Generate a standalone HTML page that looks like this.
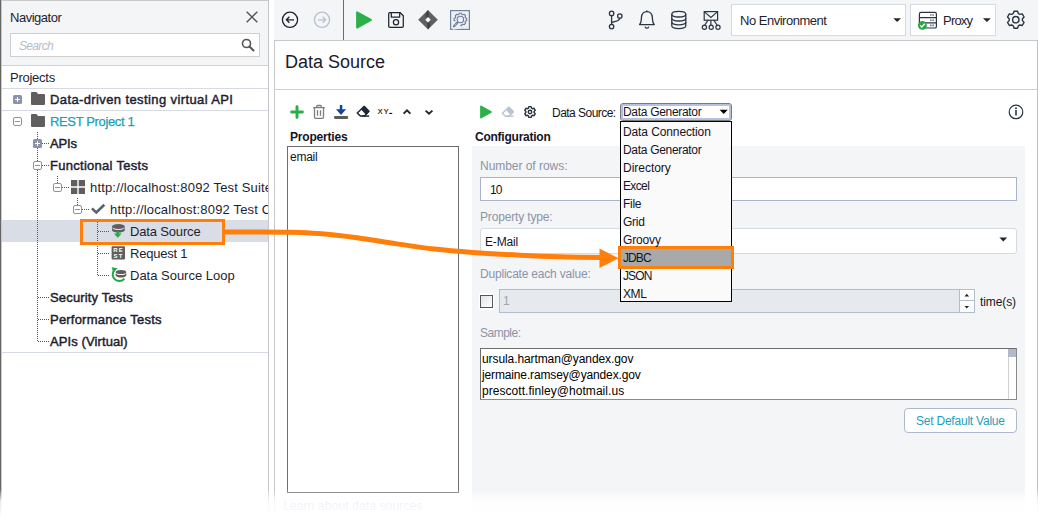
<!DOCTYPE html>
<html><head><meta charset="utf-8"><title>Data Source</title>
<style>
*{box-sizing:border-box;margin:0;padding:0}
html,body{width:1038px;height:519px;overflow:hidden;background:#fff}
body{position:relative;font-family:"Liberation Sans","DejaVu Sans",sans-serif;font-size:13px;color:#1e1e2e}
.abs,.t,.tb,.ln{position:absolute}
.t{white-space:nowrap;line-height:16px;height:16px;font-size:13px;color:#1e1e2e}
.tb{white-space:nowrap;line-height:16px;height:16px;font-size:13px;font-weight:bold;color:#1e1e2e}
.ln{background:#d6dbe3}
svg{position:absolute;overflow:visible}
.sb{-webkit-text-stroke:0.45px currentColor}
.s12{font-size:12px;color:#14141f}
.lbl{color:#8b93a9}
</style></head><body>

<!-- LEFT PANEL -->
<div class="abs" id="lp" style="left:0;top:0;width:269px;height:519px;background:#fff;overflow:hidden">
  <div class="abs" style="left:0;top:0;width:269px;height:65px;background:#f4f5f7"></div>
  <div class="ln" style="left:0;top:0;width:269px;height:1px;background:#c9c9c9"></div>
  <div class="t" style="left:10px;top:10px;letter-spacing:-0.48px">Navigator</div>
  <svg style="left:246px;top:11px" width="12" height="12" viewBox="0 0 12 12"><path d="M0.7 0.7L11.3 11.3M11.3 0.7L0.7 11.3" stroke="#555" stroke-width="1.4" fill="none"/></svg>
  <div class="abs" style="left:10px;top:33px;width:250px;height:24px;background:#fff;border:1px solid #cfcfcf"></div>
  <div class="t" style="left:19px;top:38px;font-style:italic;color:#b4bccb;font-size:12px;letter-spacing:-0.67px">Search</div>
  <svg style="left:241px;top:38px" width="14" height="14" viewBox="0 0 14 14"><circle cx="5.5" cy="5.5" r="4" stroke="#555" stroke-width="1.6" fill="none"/><path d="M8.5 8.5L12.5 12.5" stroke="#555" stroke-width="2" stroke-linecap="round"/></svg>
  <div class="ln" style="left:0;top:65px;width:269px;height:1px;background:#cfd2d6"></div>
  <div class="t" style="left:10px;top:70px;letter-spacing:-0.25px">Projects</div>
  <div class="ln" style="left:0;top:88px;width:269px;height:1px"></div>
  <div class="ln" style="left:0;top:110px;width:269px;height:1px"></div>
  <div class="ln" style="left:0;top:352px;width:269px;height:1px"></div>
  <!-- selected row -->
  <div class="abs" style="left:0;top:220px;width:269px;height:22px;background:#d9dde5"></div>

  <!-- tree dotted lines -->
  <svg style="left:0;top:0" width="269" height="519" id="tree">
    <g stroke="#555" stroke-width="1" stroke-dasharray="1 1" fill="none" shape-rendering="crispEdges">
      <path d="M37.5 132V341"/>
      <path d="M38 143.5H50M38 165.5H50M38 297.5H50M38 319.5H50M38 341.5H50"/>
      <path d="M57.5 176V187"/>
      <path d="M58 187.5H70"/>
      <path d="M77.5 198V209"/>
      <path d="M78 209.5H90"/>
      <path d="M97.5 220V275"/>
      <path d="M98 231.5H110M98 253.5H110M98 275.5H110"/>
    </g>
  </svg>

  <!-- expand boxes -->
  <svg style="left:13px;top:95px" width="9" height="9" viewBox="0 0 9 9"><rect x="0" y="0" width="9" height="9" rx="1.5" fill="#8a93a8"/><path d="M2 4.5H7M4.5 2V7" stroke="#fff" stroke-width="1"/></svg>
  <svg style="left:13px;top:117px" width="9" height="9" viewBox="0 0 9 9"><rect x="0.5" y="0.5" width="8" height="8" rx="1.5" fill="#fff" stroke="#8a93a8"/><path d="M2 4.5H7" stroke="#8a93a8" stroke-width="1"/></svg>
  <svg style="left:33px;top:139px" width="9" height="9" viewBox="0 0 9 9"><rect x="0" y="0" width="9" height="9" rx="1.5" fill="#8a93a8"/><path d="M2 4.5H7M4.5 2V7" stroke="#fff" stroke-width="1"/></svg>
  <svg style="left:33px;top:161px" width="9" height="9" viewBox="0 0 9 9"><rect x="0.5" y="0.5" width="8" height="8" rx="1.5" fill="#fff" stroke="#8a93a8"/><path d="M2 4.5H7" stroke="#8a93a8" stroke-width="1"/></svg>
  <svg style="left:53px;top:183px" width="9" height="9" viewBox="0 0 9 9"><rect x="0.5" y="0.5" width="8" height="8" rx="1.5" fill="#fff" stroke="#8a93a8"/><path d="M2 4.5H7" stroke="#8a93a8" stroke-width="1"/></svg>
  <svg style="left:73px;top:205px" width="9" height="9" viewBox="0 0 9 9"><rect x="0.5" y="0.5" width="8" height="8" rx="1.5" fill="#fff" stroke="#8a93a8"/><path d="M2 4.5H7" stroke="#8a93a8" stroke-width="1"/></svg>

  <!-- folder icons -->
  <svg style="left:31px;top:92px" width="14" height="13" viewBox="0 0 14 13"><path d="M1 0H5.5L7 2H13a1 1 0 0 1 1 1V12a1 1 0 0 1-1 1H1a1 1 0 0 1-1-1V1a1 1 0 0 1 1-1z" fill="#5f5f5f"/></svg>
  <svg style="left:31px;top:114px" width="14" height="13" viewBox="0 0 14 13"><path d="M1 0H5.5L7 2H13a1 1 0 0 1 1 1V12a1 1 0 0 1-1 1H1a1 1 0 0 1-1-1V1a1 1 0 0 1 1-1z" fill="#5f5f5f"/></svg>

  <div class="t sb" style="left:50px;top:92px;letter-spacing:0.39px">Data-driven testing virtual API</div>
  <div class="t" style="left:50px;top:114px;color:#17a2b8;-webkit-text-stroke:0.25px #17a2b8;letter-spacing:-0.36px">REST Project 1</div>
  <div class="t sb" style="left:50px;top:136px;letter-spacing:-0.12px">APIs</div>
  <div class="t sb" style="left:50px;top:158px;letter-spacing:0.28px">Functional Tests</div>
  <!-- suite icon -->
  <svg style="left:71px;top:180px" width="14" height="14" viewBox="0 0 14 14"><path d="M0 0H6.3V6.3H0zM7.7 0H14V6.3H7.7zM0 7.7H6.3V14H0zM7.7 7.7H14V14H7.7z" fill="#5f5f5f"/></svg>
  <div class="t" style="left:90px;top:180px;letter-spacing:0.17px">http://localhost:8092 Test Suite</div>
  <svg style="left:0;top:0" width="269" height="519"><path d="M91.9 208.4L96.3 212.5L104.3 204.7" stroke="#5b626f" stroke-width="2.6" fill="none"/></svg>
  <div class="t" style="left:110px;top:202px;letter-spacing:0.17px">http://localhost:8092 Test Case</div>
  <!-- data source icon -->
  <svg style="left:0;top:0" width="269" height="519"><g fill="#5f5f5f"><ellipse cx="118.4" cy="226.4" rx="6.3" ry="2.5"/><path d="M112.1 228.2C113.5 230.6 123.3 230.6 124.7 228.2V230.6C123.3 233.4 113.5 233.4 112.1 230.6z"/><path d="M112.1 226.4V230.6H113V226.4zM123.8 226.4V230.6H124.7V226.4z" opacity="0.7"/></g><path d="M116.6 231.4H119V233.6H121.7L117.8 237.7L113.9 233.6H116.6z" fill="#28a745"/></svg>
  <div class="t" style="left:130px;top:224px;letter-spacing:-0.16px">Data Source</div>
  <!-- REST icon -->
  <svg style="left:0;top:0" width="269" height="519"><rect x="111.6" y="246.2" width="13.4" height="13.4" rx="1" fill="#5f5f5f"/><text x="118.6" y="252.4" font-size="6" font-weight="bold" fill="#fff" text-anchor="middle" font-family="Liberation Sans, sans-serif" letter-spacing="1.2">RE</text><text x="118.6" y="258.4" font-size="6" font-weight="bold" fill="#fff" text-anchor="middle" font-family="Liberation Sans, sans-serif" letter-spacing="1.2">ST</text></svg>
  <div class="t" style="left:130px;top:246px;letter-spacing:-0.21px">Request 1</div>
  <!-- loop icon -->
  <svg style="left:0;top:0" width="269" height="519"><path d="M114.2 270.2A6.4 6.4 0 1 0 124.4 278.6" stroke="#28a745" stroke-width="2" fill="none"/><path d="M111.6 267.2L117.6 268.2L113.4 272.8z" fill="#28a745"/><g fill="#5f5f5f"><ellipse cx="121" cy="272" rx="5.2" ry="2.1"/><path d="M115.8 273.6C117 275.6 125 275.6 126.2 273.6V275.8C125 278.2 117 278.2 115.8 275.8z"/><path d="M115.8 272V275.8H116.6V272zM125.4 272V275.8H126.2V272z" opacity="0.7"/></g></svg>
  <div class="t" style="left:130px;top:268px;letter-spacing:-0.01px">Data Source Loop</div>
  <div class="t sb" style="left:50px;top:290px;letter-spacing:0.16px">Security Tests</div>
  <div class="t sb" style="left:50px;top:312px;letter-spacing:0.21px">Performance Tests</div>
  <div class="t sb" style="left:50px;top:334px;letter-spacing:0.10px">APIs (Virtual)</div>

  <div class="abs" style="left:0;top:0;width:1px;height:519px;background:#666"></div><div class="abs" style="left:1px;top:0;width:1px;height:519px;background:#c9c9c9"></div>
  <div class="abs" style="left:268px;top:0;width:1px;height:519px;background:#c6c6c6"></div>
</div>

<!-- RIGHT PANEL -->
<div class="abs" id="rp" style="left:274px;top:0;width:764px;height:519px;background:#fff;overflow:hidden">
  <div class="abs" style="left:0;top:0;width:764px;height:40px;background:#f4f5f7"></div>
  <div class="ln" style="left:0;top:40px;width:764px;height:1px;background:#c8c8c8"></div>
  <div class="ln" style="left:0;top:40px;width:1px;height:479px;background:#c8c8c8"></div>
  <div class="ln" style="left:69px;top:0;width:1px;height:40px;background:#6b6b6b"></div>
  <div class="ln" style="left:0;top:89px;width:764px;height:1px;background:#cfcfcf"></div>
  <div class="abs" style="left:11px;top:51px;font-size:18px;line-height:22px;white-space:nowrap;color:#1a1a2a">Data Source</div>
  <div class="ln" style="left:763px;top:40px;width:1px;height:479px;background:#c0c0c0"></div>

  <!-- toolbar icons (coords relative to rp: x-274) -->
  <svg style="left:0;top:0" width="764" height="40" id="tbicons">
    <!-- back -->
    <g transform="translate(16,19.8)" fill="none" stroke="#1f2430" stroke-width="1.3"><circle r="7.6"/><path d="M4 0H-3.6M-0.6 -3L-3.6 0L-0.6 3"/></g>
    <!-- forward -->
    <g transform="translate(48,19.8)" fill="none" stroke="#b9c0d0" stroke-width="1.3"><circle r="7.6"/><path d="M-4 0H3.6M0.6 -3L3.6 0L0.6 3"/></g>
    <!-- play -->
    <path d="M83.1 12.3L96.9 19.9L83.1 27.5z" fill="#2cb04a" stroke="#2cb04a" stroke-width="2" stroke-linejoin="round"/>
    <!-- save -->
    <g fill="none" stroke="#1f2430" stroke-width="1.25" stroke-linejoin="round"><path d="M115.7 12.7H126.3L129.3 15.7V26.3a1 1 0 0 1-1 1H115.7a1 1 0 0 1-1-1V13.7a1 1 0 0 1 1-1z"/><path d="M117.3 12.7V17H125.7V12.7"/><circle cx="122" cy="22.3" r="2.6"/></g>
    <!-- jira diamond -->
    <defs><linearGradient id="jg1" x1="1" y1="0" x2="0" y2="0.6"><stop offset="0" stop-color="#1d2430"/><stop offset="1" stop-color="#1d2430" stop-opacity="0"/></linearGradient><linearGradient id="jg2" x1="0" y1="1" x2="1" y2="0.4"><stop offset="0" stop-color="#1d2430"/><stop offset="1" stop-color="#1d2430" stop-opacity="0"/></linearGradient></defs>
    <g transform="translate(154,19.8)"><path d="M0 -9.8L9.8 0L0 9.8L-9.8 0z" fill="#606060"/><path d="M0 -9.8L0.7 -2.6L-2.6 0.6L-3.2 -5z" fill="url(#jg1)"/><path d="M0 9.8L-0.7 2.6L2.6 -0.6L3.2 5z" fill="url(#jg2)"/><path d="M0 -2.7L2.7 0L0 2.7L-2.7 0z" fill="#fff"/></g>
    <!-- inspect -->
    <rect x="176.6" y="10.6" width="18.8" height="18.8" fill="#eef0f5" stroke="#7283a2" stroke-width="1.2"/>
    <g transform="translate(186.4,19.5)" fill="none" stroke="#6d7d9b" stroke-width="1.1" stroke-linejoin="round"><path d="M-1.46 -5.09L-1.11 -6.30L1.11 -6.30L1.46 -5.09L2.57 -4.64L3.67 -5.24L5.24 -3.67L4.64 -2.57L5.09 -1.46L6.30 -1.11L6.30 1.11L5.09 1.46L4.64 2.57L5.24 3.67L3.67 5.24L2.57 4.64L1.46 5.09L1.11 6.30L-1.11 6.30L-1.46 5.09L-2.57 4.64L-3.67 5.24L-5.24 3.67L-4.64 2.57L-5.09 1.46L-6.30 1.11L-6.30 -1.11L-5.09 -1.46L-4.64 -2.57L-5.24 -3.67L-3.67 -5.24L-2.57 -4.64z"/><path d="M-9 1L-1 1L-1 9L-9 9z" fill="#eef0f5" stroke="none" transform="rotate(-8)"/><circle r="3.2"/><path d="M-3.2 3.4L-6.4 6.8" stroke-width="2.3" stroke-linecap="round"/><path d="M-3.6 3.9L-5.8 6.2" stroke="#eef0f5" stroke-width="0.6"/></g>
    <!-- branch -->
    <g fill="none" stroke="#2b3442" stroke-width="1.3"><circle cx="337.6" cy="13.4" r="2.2"/><circle cx="337.6" cy="26.6" r="2.2"/><circle cx="345.8" cy="16" r="2.2"/><path d="M337.6 15.6V24.4M345.8 18.2C345.8 21.2 340.4 21.4 337.6 22.8"/></g>
    <!-- bell -->
    <g fill="none" stroke="#2b3442" stroke-width="1.3" stroke-linejoin="round" stroke-linecap="round"><path d="M365.5 24.6C367.6 22.6 367.2 20.6 367.4 17.6C367.7 13.8 370 11.6 372.9 11.6C375.8 11.6 378.1 13.8 378.4 17.6C378.6 20.6 378.2 22.6 380.3 24.6z"/><path d="M371.3 27.2C371.8 28.4 374 28.4 374.5 27.2"/><path d="M372.9 11.4V10.8"/></g>
    <!-- db -->
    <g fill="none" stroke="#2b3442" stroke-width="1.3"><ellipse cx="404.8" cy="14.2" rx="7" ry="2.8"/><path d="M397.8 14.2V25.8C397.8 27.4 401 28.6 404.8 28.6C408.6 28.6 411.8 27.4 411.8 25.8V14.2"/><path d="M397.8 18.2C397.8 19.8 401 21 404.8 21C408.6 21 411.8 19.8 411.8 18.2M397.8 22C397.8 23.6 401 24.8 404.8 24.8C408.6 24.8 411.8 23.6 411.8 22"/></g>
    <!-- envelope network -->
    <g fill="none" stroke="#2b3442" stroke-width="1.2"><rect x="430.2" y="11.6" width="13.4" height="8.6"/><path d="M430.2 11.6L436.9 17.4L443.6 11.6"/><path d="M436.9 20.2V25M434 20.2L430.8 25M439.8 20.2L443 25"/><circle cx="430.4" cy="27.2" r="2.1"/><circle cx="437.2" cy="27.2" r="2.1"/><circle cx="444" cy="27.2" r="2.1"/></g>
    <!-- env box -->
    <rect x="457.5" y="4.5" width="174" height="31" fill="#fff" stroke="#d5dae3"/>
    <path d="M619.3 18.2H627L623.15 22z" fill="#1f2430"/>
    <!-- proxy box -->
    <rect x="636.5" y="4.5" width="85" height="31" fill="#fff" stroke="#d5dae3"/>
    <g fill="none" stroke="#2b3442" stroke-width="1.2"><rect x="645.4" y="12.4" width="17" height="15.6" rx="1.6"/><path d="M645.4 17.6H662.4M645.4 22.8H662.4"/><path d="M656 15H660M656 20.2H660M656 25.4H660" stroke-width="1.6" stroke="#7d838f" stroke-dasharray="1.7 0.6"/></g>
    <circle cx="648.4" cy="25.4" r="4.4" fill="#28a745"/><path d="M646.2 25.4L647.8 27L650.8 23.8" stroke="#fff" stroke-width="1.3" fill="none"/>
    <path d="M709 18.2H716.8L712.9 22z" fill="#1f2430"/>
    <!-- gear -->
    <g transform="translate(741.8,19.7)" fill="none" stroke="#2b3442" stroke-width="1.4" stroke-linejoin="round"><circle r="3.2"/><path d="M-2.51 -6.21L-1.81 -8.51L1.81 -8.51L2.51 -6.21L4.12 -5.28L6.47 -5.82L8.27 -2.69L6.63 -0.93L6.63 0.93L8.27 2.69L6.47 5.82L4.12 5.28L2.51 6.21L1.81 8.51L-1.81 8.51L-2.51 6.21L-4.12 5.28L-6.47 5.82L-8.27 2.69L-6.63 0.93L-6.63 -0.93L-8.27 -2.69L-6.47 -5.82L-4.12 -5.28z"/></g>
  </svg>
  <div class="t" style="left:466px;top:13px;letter-spacing:-0.49px">No Environment</div>
  <div class="t" style="left:669px;top:13px;letter-spacing:-0.79px">Proxy</div>

  <!-- properties toolbar -->
  <svg style="left:0;top:100px" width="764" height="24" id="ptb">
    <!-- plus -->
    <path d="M23 6.6V17.4M17.6 12H28.4" stroke="#27ae49" stroke-width="2.9" stroke-linecap="round" fill="none"/>
    <!-- trash -->
    <g fill="none" stroke="#7e7e7e" stroke-width="1.3" stroke-linejoin="round"><path d="M39.2 7.6H50.8"/><path d="M42.7 7.4V6.4a0.9 0.9 0 0 1 0.9-0.9H46.4a0.9 0.9 0 0 1 0.9 0.9V7.4"/><path d="M40.5 7.8V17.2a1.1 1.1 0 0 0 1.1 1.1H48.4a1.1 1.1 0 0 0 1.1-1.1V7.8"/><path d="M43.5 10.2V15.8M46.5 10.2V15.8"/></g>
    <!-- download -->
    <path d="M65.8 5H68.3V9.2H72.1L67.05 14.9L62 9.2H65.8z" fill="#13439c"/><rect x="60.1" y="16" width="14" height="2.9" rx="0.8" fill="#5c5c5c"/>
    <!-- eraser -->
    <g stroke="#1f2937" stroke-width="1.5" stroke-linejoin="round"><path d="M90.2 6.5L94.8 11.3L90.4 16.1H86.6L83.2 13z" fill="#fff"/><path d="M90.2 6.5L94.8 11.3L92.3 14L87.6 9.1z" fill="#1f2937"/><path d="M88 16.1H95.2" fill="none"/></g>
    <text x="103.8" y="14" font-size="7.2" letter-spacing="1.2" fill="#111" stroke="#111" stroke-width="0.2" font-family="Liberation Sans, sans-serif">XY</text><rect x="115.2" y="12.9" width="3" height="1.1" fill="#111"/>
    <!-- chevrons -->
    <path d="M129.6 13.6L133 10.4L136.4 13.6" stroke="#1f2430" stroke-width="1.9" fill="none"/>
    <path d="M151.6 10.6L155 13.8L158.4 10.6" stroke="#1f2430" stroke-width="1.9" fill="none"/>
    <!-- play -->
    <path d="M207.1 6.5L216.9 12L207.1 17.5z" fill="#2cb04a" stroke="#2cb04a" stroke-width="2" stroke-linejoin="round"/>
    <!-- light eraser -->
    <g stroke="#bcc3d1" stroke-width="1.5" stroke-linejoin="round" transform="translate(144.8,0.4) translate(89,11) scale(0.94) translate(-89,-11)"><path d="M90.2 6.5L94.8 11.3L90.4 16.1H86.6L83.2 13z" fill="#fff"/><path d="M90.2 6.5L94.8 11.3L92.3 14L87.6 9.1z" fill="#bcc3d1"/><path d="M88 16.1H95.2" fill="none"/></g>
    <!-- small gear -->
    <g transform="translate(256,12)" fill="none" stroke="#2b3442" stroke-width="1.45" stroke-linejoin="round"><circle r="1.7"/><path d="M-1.60 -3.77L-1.14 -5.38L1.14 -5.38L1.60 -3.77L2.47 -3.27L4.09 -3.68L5.23 -1.70L4.07 -0.50L4.07 0.50L5.23 1.70L4.09 3.68L2.47 3.27L1.60 3.77L1.14 5.38L-1.14 5.38L-1.60 3.77L-2.47 3.27L-4.09 3.68L-5.23 1.70L-4.07 0.50L-4.07 -0.50L-5.23 -1.70L-4.09 -3.68L-2.47 -3.27z"/></g>
    <!-- info -->
    <g transform="translate(742,11.9)"><circle r="6.8" fill="none" stroke="#2b3442" stroke-width="1.2"/><path d="M0 -1.8V3.7" stroke="#2b3442" stroke-width="1.6" fill="none"/><circle cx="0" cy="-3.7" r="0.95" fill="#2b3442"/></g>
  </svg>
  <div class="tb s12" style="left:16px;top:129px;letter-spacing:-0.20px">Properties</div>
  <div class="tb s12" style="left:201px;top:129px;letter-spacing:-0.24px">Configuration</div>
  <div class="t s12" style="left:278px;top:105px;letter-spacing:-0.53px">Data Source:</div>

  <!-- properties list -->
  <div class="abs" style="left:13px;top:146px;width:172px;height:347px;background:#fff;border:1px solid #6e6e6e"></div>
  <div class="t s12" style="left:16px;top:149px;letter-spacing:-0.24px">email</div>
  <div class="abs" style="left:9px;top:498px;font-size:12.3px;line-height:16px;color:#6a8fd0;white-space:nowrap">Learn about data sources</div>

  <!-- config panel -->
  <div class="abs" style="left:198px;top:146px;width:553px;height:373px;background:#f4f5f7"></div>
  <div class="t s12 lbl" style="left:206px;top:158px;letter-spacing:-0.04px">Number of rows:</div>
  <div class="abs" style="left:206px;top:177px;width:537px;height:24px;background:#fff;border:1px solid #a9b3c9"></div>
  <div class="t s12" style="left:216px;top:182px;letter-spacing:-0.90px">10</div>
  <div class="t s12 lbl" style="left:206px;top:209px;letter-spacing:-0.16px">Property type:</div>
  <div class="abs" style="left:206px;top:228px;width:537px;height:26px;background:#fff;border:1px solid #d5dae3;border-radius:3px"></div>
  <div class="t s12" style="left:211px;top:234px;letter-spacing:-0.15px">E-Mail</div>
  <svg style="left:725px;top:237px" width="9" height="6"><path d="M0.4 0.6H8.2L4.3 4.6z" fill="#1f2430"/></svg>
  <div class="t s12 lbl" style="left:206px;top:266px;letter-spacing:-0.20px">Duplicate each value:</div>
  <div class="abs" style="left:205px;top:293px;width:15px;height:17px;background:#fff"></div>
  <div class="abs" style="left:206px;top:295px;width:13px;height:13px;border:1px solid #555;background:linear-gradient(135deg,#e4e4e4,#fff)"></div>
  <div class="abs" style="left:225px;top:289px;width:461px;height:24px;background:#e6e9ee;border:1px solid #b3bccb"></div>
  <div class="t s12" style="left:229px;top:293px;color:#a4a4a4">1</div>
  <div class="abs" style="left:685px;top:289px;width:16px;height:24px;background:#fff;border:1px solid #b3bccb"></div>
  <div class="abs" style="left:685px;top:300px;width:16px;height:1px;background:#b3bccb"></div>
  <svg style="left:690px;top:293px" width="6" height="17"><path d="M0.5 3.4H5.1L2.8 0.8zM0.5 13H5.1L2.8 15.6z" fill="#222"/></svg>
  <div class="t s12" style="left:706px;top:294px;letter-spacing:-0.10px">time(s)</div>
  <div class="t s12 lbl" style="left:206px;top:325px;letter-spacing:-0.50px">Sample:</div>
  <div class="abs" style="left:206px;top:348px;width:537px;height:52px;background:#fff;border:1px solid #6e6e6e;border-right-color:#8a8a8a;border-bottom-color:#8a8a8a"></div>
  <div class="abs" style="left:734px;top:349px;width:8px;height:50px;background:#fff;border-left:1px solid #d0d0d0"></div>
  <div class="abs" style="left:734px;top:349px;width:8px;height:8px;background:#b2bac9"></div>
  <div class="t s12" style="left:208px;top:351px;color:#000;letter-spacing:-0.09px">ursula.hartman@yandex.gov</div>
  <div class="t s12" style="left:208px;top:367px;color:#000;letter-spacing:-0.14px">jermaine.ramsey@yandex.gov</div>
  <div class="t s12" style="left:208px;top:383px;color:#000;letter-spacing:0.05px">prescott.finley@hotmail.us</div>
  <div class="abs" style="left:630px;top:408px;width:113px;height:25px;background:#fff;border:1px solid #aeb8ca;border-radius:4px"></div>
  <div class="t s12" style="left:642px;top:413px;color:#1ea0b8;letter-spacing:-0.22px">Set Default Value</div>

  <!-- data source combo -->
  <div class="abs" style="left:346px;top:103px;width:112px;height:18px;background:#fff;border:1px solid #7b7b7b;border-radius:3px;box-shadow:inset 0 0 0 2px #b4c2e0"></div>
  <div class="t s12" style="left:349px;top:104px;letter-spacing:-0.31px">Data Generator</div>
  <svg style="left:445px;top:109px" width="10" height="6"><path d="M0.6 0.8H8.8L4.7 5z" fill="#000"/></svg>
  <!-- dropdown -->
  <div class="abs" style="left:346px;top:121px;width:112px;height:181px;background:#fafafb;border:1px solid #000"></div>
  <div class="abs" style="left:344px;top:246px;width:116px;height:23px;background:#a9a9a9;border:3px solid #ff7f0a"></div>
    <div class="t s12" style="left:349px;top:124px;letter-spacing:-0.11px">Data Connection</div>
    <div class="t s12" style="left:349px;top:142px;letter-spacing:-0.31px">Data Generator</div>
    <div class="t s12" style="left:349px;top:160px;letter-spacing:-0.02px">Directory</div>
    <div class="t s12" style="left:349px;top:178px;letter-spacing:-0.63px">Excel</div>
    <div class="t s12" style="left:349px;top:196px;letter-spacing:-0.31px">File</div>
    <div class="t s12" style="left:349px;top:214px;letter-spacing:-0.27px">Grid</div>
    <div class="t s12" style="left:349px;top:232px;letter-spacing:-0.15px">Groovy</div>
    <div class="t s12" style="left:349px;top:250px;letter-spacing:-0.90px">JDBC</div>
    <div class="t s12" style="left:349px;top:268px;letter-spacing:-0.90px">JSON</div>
    <div class="t s12" style="left:349px;top:286px;letter-spacing:-0.40px">XML</div>
</div>

<!-- arrow -->
<svg style="left:0;top:0" width="1038" height="519" id="arrow">
  <rect x="81.5" y="220.5" width="142" height="23" fill="none" stroke="#ff7f0a" stroke-width="3"/>
  <path d="M225.0 232.0C230.8 232.0 249.2 231.9 260.0 231.9C270.8 231.9 280.2 231.9 290.0 232.2C299.8 232.5 307.3 232.7 318.5 233.6C329.7 234.5 344.1 236.1 357.0 237.8C369.9 239.5 382.8 241.7 395.6 243.6C408.4 245.5 421.1 247.5 434.0 249.0C446.9 250.5 458.4 251.4 472.7 252.4C487.0 253.4 505.4 254.5 520.0 255.2C534.5 255.9 546.3 256.4 560.0 256.8C573.7 257.2 595.0 257.5 602.0 257.6" fill="none" stroke="#ff7f0a" stroke-width="5"/>
  <path d="M599.5 248.5L618.5 258.3L599.5 268z" fill="#ff7f0a"/>
</svg>
<!-- bottom fade -->
<div class="abs" style="left:0;top:489px;width:1038px;height:30px;background:linear-gradient(to bottom,rgba(255,255,255,0) 0,rgba(255,255,255,0.5) 7px,rgba(255,255,255,0.86) 12px,rgba(255,255,255,0.93) 21px,rgba(255,255,255,1) 29px)"></div>

</body></html>
